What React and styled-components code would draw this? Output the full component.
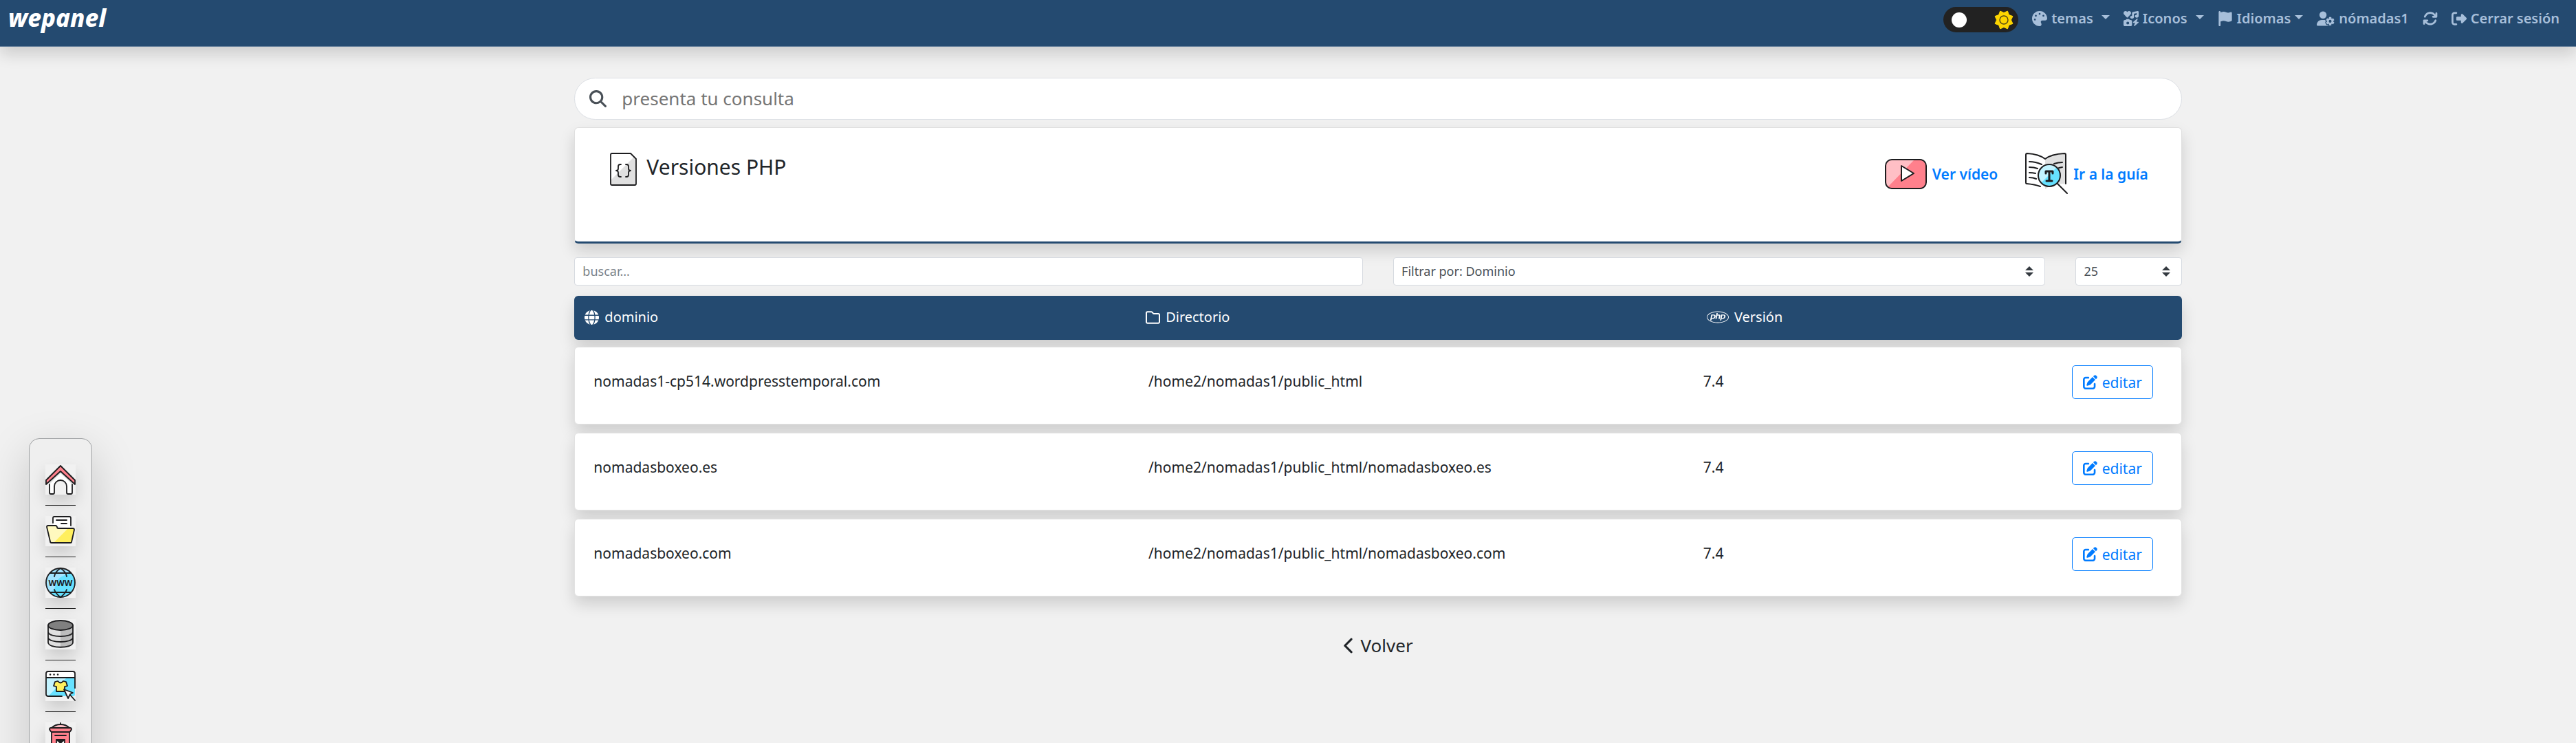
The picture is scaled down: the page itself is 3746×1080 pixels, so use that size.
import React from 'react'
import styled, { createGlobalStyle } from 'styled-components'
import {
    FaPalette, FaIcons, FaFlag, FaUserGear, FaArrowsRotate, FaRightFromBracket,
    FaMagnifyingGlass, FaGlobe, FaRegFolder, FaPhp, FaPenToSquare, FaChevronLeft
} from 'react-icons/fa6';

const domains = [
    { name: 'nomadas1-cp514.wordpresstemporal.com', dir: '/home2/nomadas1/public_html', php: '7.4' },
    { name: 'nomadasboxeo.es', dir: '/home2/nomadas1/public_html/nomadasboxeo.es', php: '7.4' },
    { name: 'nomadasboxeo.com', dir: '/home2/nomadas1/public_html/nomadasboxeo.com', php: '7.4' },
]

const ink = { stroke: '#1d1d1f', strokeWidth: 1.8, strokeLinecap: 'round', strokeLinejoin: 'round' }

const SunIcon = () => (
    <svg width="28" height="28" viewBox="-14 -14 28 28" aria-hidden="true">
        <path
            fill="#fdd500"
            d="M5.4-12.9 7.4-7.4 12.9-5.4 10.5 0 12.9 5.4 7.4 7.4 5.4 12.9 0 10.5-5.4 12.9-7.4 7.4-12.9 5.4-10.5 0-12.9-5.4-7.4-7.4-5.4-12.9 0-10.5Z"
            stroke="#fdd500" strokeWidth="1" strokeLinejoin="round"
        />
        <circle r="6" fill="none" stroke="#4d4416" strokeWidth="1.4" />
    </svg>
)

const CodeFileIcon = () => (
    <svg width="39" height="48" viewBox="0 0 39 48" aria-hidden="true">
        <path d="M3 1H30L38 9V45Q38 47 36 47H3Q1 47 1 45V3Q1 1 3 1Z" fill="#fff" />
        <path d="M38 3V45Q38 47 36 47H3Q1 47 1 45V40Z" fill="#e0e0e0" />
        <path d="M30 1H38V9Z" fill="#fff" />
        <g fill="none" {...ink}>
            <path d="M3 1H30L38 9V45Q38 47 36 47H3Q1 47 1 45V3Q1 1 3 1Z" />
            <path d="M16 17H15Q12 17 12 20V23Q12 26 9 26Q12 26 12 29V32Q12 35 15 35H16" />
            <path d="M23 17H24Q27 17 27 20V23Q27 26 30 26Q27 26 27 29V32Q27 35 24 35H23" />
        </g>
    </svg>
)

const VideoIcon = () => (
    <svg width="61" height="62" viewBox="0 0 61 62" aria-hidden="true">
        <rect x="1" y="10" width="59" height="42" rx="9" fill="#ff808c" />
        <path d="M10 10H43L5 49Q1 47 1 43V19Q1 10 10 10Z" fill="#ffbfc5" />
        <rect x="1" y="10" width="59" height="42" rx="9" fill="none" {...ink} strokeWidth="2" />
        <path d="M24 19V41L42 30Z" fill="#fff" {...ink} strokeWidth="2" />
    </svg>
)

const GuideIcon = () => (
    <svg width="62" height="62" viewBox="0 0 62 62" aria-hidden="true">
        <path d="M1 3Q1 1 3 1Q20 2 29 9V53Q20 45 1 45Z" fill="#fff" />
        <path d="M29 9Q38 2 57 1Q59 1 59 3V45Q38 45 29 53Z" fill="#e0e0e0" />
        <g fill="none" {...ink} strokeWidth="2">
            <path d="M22 49Q14 46 2 45Q1 45 1 43V3Q1 1 3 1Q20 2 29 9Q38 2 57 1Q59 1 59 3V45" />
            <path d="M6 13Q15 13 24 17M6 21Q13 21 18 23M6 29Q11 29 15 30M6 36Q12 36 16 38" />
            <path d="M42 16Q48 14 54 14M49 22L54 21" />
            <path d="M47 45L61 59" />
        </g>
        <circle cx="35" cy="33" r="16" fill="#66e1ff" />
        <path d="M23 44A16 16 0 0 1 46 21Z" fill="#c2f3ff" />
        <circle cx="35" cy="33" r="16" fill="none" {...ink} strokeWidth="2" />
        <path d="M30 30V27H40V30M35 27V41M31 41H39" fill="none" {...ink} strokeWidth="3" />
    </svg>
)

const HomeIcon = () => (
    <svg width="44" height="44" viewBox="0 0 44 44" aria-hidden="true">
        <path d="M6 28 22 11 39 28V43H31V32A9 9 0 0 0 13 32V43H6Z" fill="#fff" />
        <path d="M6 25 22 9 39 25V29L22 13 6 29Z" fill="#e0e0e0" />
        <path d="M22 2 1 23V29L22 10 43 29V23Z" fill="#ff808c" {...ink} />
        <path d="M6 29V41Q6 43 8 43H11Q13 43 13 41V32A9 9 0 0 1 31 32V41Q31 43 33 43H37Q39 43 39 41V29" fill="none" {...ink} />
    </svg>
)

const FolderIcon = () => (
    <svg width="44" height="44" viewBox="0 0 44 44" aria-hidden="true">
        <path d="M11 14V3Q11 1 13 1H35Q37 1 37 3V17Z" fill="#fff" />
        <path d="M11 10V3Q11 1 13 1H35Q37 1 37 3V14M16 6H31M23 11H31" fill="none" {...ink} />
        <path d="M4 14H15Q16 14 17 16Q17 18 19 18H40Q42 18 42 20L38 38Q38 39 36 39H9Q7 39 7 37L2 16Q2 14 4 14Z" fill="#ffef5e" />
        <path d="M4 14H15Q16 14 17 16Q17 18 19 18H33L12 39H9Q7 39 7 37L2 16Q2 14 4 14Z" fill="#fff9bf" />
        <path d="M4 14H15Q16 14 17 16Q17 18 19 18H40Q42 18 42 20L38 38Q38 39 36 39H9Q7 39 7 37L2 16Q2 14 4 14Z" fill="none" {...ink} />
    </svg>
)

const WwwIcon = () => (
    <svg width="44" height="44" viewBox="0 0 44 44" aria-hidden="true">
        <circle cx="22" cy="22" r="21" fill="#66e1ff" />
        <path d="M22 1A21 21 0 0 0 7 37Q15 30 16 22T36 8Q30 1 22 1Z" fill="#a3e4ff" />
        <g fill="none" {...ink}>
            <circle cx="22" cy="22" r="21" />
            <path d="M7 8H37M7 36H37M22 1Q14 6 13 13M22 1Q30 6 31 13M22 43Q15 38 13 32M22 43Q29 38 31 32" />
        </g>
        <text x="22" y="27" textAnchor="middle" fontFamily='"Noto Sans", sans-serif' fontSize="12" fontWeight="700" fill="#1d1d1f">WWW</text>
    </svg>
)

const DatabaseIcon = () => (
    <svg width="44" height="44" viewBox="0 0 44 44" aria-hidden="true">
        <path d="M4 9V34Q5 41 22 41V9Z" fill="#e0e0e0" />
        <path d="M40 9V34Q39 41 22 41V9Z" fill="#bdbdbd" />
        <path d="M4 9V34C5 43 39 43 40 34V9M4 19C6 27 38 27 40 19M4 27C6 35 38 35 40 27" fill="none" {...ink} />
        <ellipse cx="22" cy="9" rx="18" ry="7" fill="#808080" {...ink} />
    </svg>
)

const DesignIcon = () => (
    <svg width="44" height="44" viewBox="0 0 44 44" aria-hidden="true">
        <rect x="1" y="1" width="42" height="36" rx="3" fill="#66e1ff" />
        <path d="M1 10H31L5 36Q1 37 1 34Z" fill="#c2f3ff" />
        <path d="M1 10V4Q1 1 4 1H40Q43 1 43 4V10Z" fill="#fff" />
        <path d="M24 37H4Q1 37 1 34V4Q1 1 4 1H40Q43 1 43 4V25M1 10H43" fill="none" {...ink} />
        <path d="M7 5.5H7.1M12.5 5.5H12.6M18 5.5H18.1" {...ink} strokeWidth="2.5" />
        <path d="M18 15Q22 20 26 15L30 16 32 22 28 23V30H16V23L12 22 14 16Z" fill="#ffef5e" {...ink} />
        <path d="M35 34 43 43" {...ink} />
        <path d="M27 27 40 32 36 34 33 40Z" fill="#fff" {...ink} />
    </svg>
)

const MailboxIcon = () => (
    <svg width="44" height="44" viewBox="0 0 44 44" aria-hidden="true">
        <path d="M9 14H35V46H9Z" fill="#ff808c" {...ink} />
        <path d="M9 8Q14 3 22 3T35 8Z" fill="#ffbfc5" {...ink} />
        <path d="M22 1V3" {...ink} />
        <path d="M8 8H36Q38 8 38 10L37 12Q36 14 34 14H10Q8 14 7 12L6 10Q6 8 8 8Z" fill="#ff808c" {...ink} />
        <path d="M14 19H30" {...ink} />
        <path d="M16 25H28V40H16Z" fill="#fff" {...ink} />
        <path d="M16 25 22 30 28 25" fill="#1d1d1f" {...ink} />
    </svg>
)

const dock = [
    ['Inicio', HomeIcon],
    ['Archivos', FolderIcon],
    ['Dominios', WwwIcon],
    ['Bases de datos', DatabaseIcon],
    ['Diseño', DesignIcon],
    ['Correo', MailboxIcon],
]

const Navbar = () => {
    return (
        <NavContainer>
            <Logo href="#inicio">wepanel</Logo>
            <NavUl>
                <li>
                    <Switch>
                        <SwitchInput type="checkbox" aria-label="Modo oscuro" />
                        <Knob />
                        <SunIcon />
                    </Switch>
                </li>
                <li><NavButton type="button"><FaPalette />temas<Caret $gap="6px" /></NavButton></li>
                <li><NavButton type="button"><FaIcons />Iconos<Caret $gap="6px" /></NavButton></li>
                <li><NavButton type="button"><FaFlag />Idiomas<Caret /></NavButton></li>
                <li><NavLink href="#cuenta"><UserIcon />nómadas1</NavLink></li>
                <li><NavLink href="#recargar" aria-label="Recargar"><FaArrowsRotate /></NavLink></li>
                <li><NavLink href="#salir"><FaRightFromBracket />Cerrar sesión</NavLink></li>
            </NavUl>
        </NavContainer>
    )
}

const App = () => {
    return (
        <Wrapper>
            <GlobalStyle />
            <Navbar />
            <Layout>
                <Dock aria-label="Accesos">
                    {dock.map(([label, Icon]) => (
                        <DockItem key={label}>
                            <DockLink href="#" aria-label={label}><Icon /></DockLink>
                        </DockItem>
                    ))}
                </Dock>
                <Main>
                    <Search>
                        <FaMagnifyingGlass />
                        <SearchInput type="search" placeholder="presenta tu consulta" aria-label="presenta tu consulta" />
                    </Search>
                    <HeaderCard>
                        <Title>
                            <CodeFileIcon />
                            <h1>Versiones PHP</h1>
                        </Title>
                        <Help>
                            <HelpLink href="#video"><VideoIcon />Ver vídeo</HelpLink>
                            <HelpLink href="#guia"><GuideIcon />Ir a la guía</HelpLink>
                        </Help>
                    </HeaderCard>
                    <Filters>
                        <FilterInput type="text" placeholder="buscar..." aria-label="buscar" />
                        <FilterSelect $span={5} aria-label="Filtrar por">
                            <option>Filtrar por: Dominio</option>
                        </FilterSelect>
                        <FilterSelect $span={1} aria-label="Resultados">
                            <option>25</option>
                        </FilterSelect>
                    </Filters>
                    <Table>
                        <thead>
                            <HeadRow>
                                <HeadCell><FaGlobe />dominio</HeadCell>
                                <HeadCell><FaRegFolder />Directorio</HeadCell>
                                <HeadCell><PhpIcon />Versión</HeadCell>
                            </HeadRow>
                        </thead>
                        <tbody>
                            {domains.map((d) => (
                                <Row key={d.name}>
                                    <Cell>{d.name}</Cell>
                                    <Cell>{d.dir}</Cell>
                                    <Cell>
                                        {d.php}
                                        <EditButton type="button"><FaPenToSquare />editar</EditButton>
                                    </Cell>
                                </Row>
                            ))}
                        </tbody>
                    </Table>
                    <BackLink href="#volver"><FaChevronLeft />Volver</BackLink>
                </Main>
            </Layout>
        </Wrapper>
    )
}

export default App

const GlobalStyle = createGlobalStyle`
* {
    box-sizing: border-box;
}

body {
    margin: 0;
    background: #f1f1f1;
    color: #212529;
    font: 21px/30px "Noto Sans", "Open Sans", sans-serif;
}

input, select, button {
    font-family: inherit;
}

svg {
    flex-shrink: 0;
}
`

const Wrapper = styled.div`
height: 100vh;
overflow: hidden;
`

const NavContainer = styled.nav`
display: flex;
justify-content: space-between;
align-items: flex-start;
padding: 10px 24px 20px 12px;
background: #244a70;
border-bottom: 1px solid #5f7b98;
box-shadow: 0 11px 22px rgba(0, 0, 0, 0.15);
`

const Logo = styled.a`
color: #fff;
font-size: 35px;
font-style: italic;
font-weight: 800;
line-height: 32px;
text-decoration: none;
`

const NavUl = styled.ul`
display: flex;
align-items: flex-start;
gap: 20px;
list-style: none;
margin: 0;
padding: 0;
`

const NavLink = styled.a`
display: flex;
align-items: center;
gap: 6px;
min-height: 34px;
padding: 0;
border: 0;
background: none;
color: #a7bfda;
font-size: 20px;
font-weight: 600;
line-height: 34px;
text-decoration: none;
cursor: pointer;

svg {
    width: 22px;
    height: 22px;
}
`

const NavButton = styled(NavLink).attrs({ as: 'button' })``

const UserIcon = styled(FaUserGear)`
&& {
    width: 26px;
}
`

const Caret = styled.span`
border: 6px solid transparent;
border-top-color: #a7bfda;
border-bottom: 0;
margin-left: ${(p) => p.$gap || '0'};
margin-bottom: 4px;
`

const Switch = styled.label`
display: flex;
align-items: center;
justify-content: space-between;
width: 109px;
height: 37px;
padding: 0 7px 0 12px;
border-radius: 19px;
background: #222;
cursor: pointer;
`

const SwitchInput = styled.input`
position: absolute;
opacity: 0;
margin: 0;
`

const Knob = styled.span`
width: 22px;
height: 22px;
border-radius: 50%;
background: #fff;
`

const Layout = styled.div`
display: grid;
grid-template-columns: 22.3% 62.4% 1fr;
align-items: start;
`

const Dock = styled.ul`
justify-self: start;
list-style: none;
margin: 569px 0 0 42px;
padding: 22px 23px;
border: 1px solid #a0a2a4;
border-radius: 15px;
background: #efefef;
box-shadow: 0 22px 66px rgba(0, 0, 0, 0.18);
`

const DockItem = styled.li`
padding: 15px 0;

& + & {
    border-top: 1px solid #222;
}
`

const DockLink = styled.a`
display: block;
width: 44px;
height: 44px;
background: #f1f1f1;
box-shadow: 0 11px 22px rgba(0, 0, 0, 0.15);

svg {
    display: block;
}
`

const Main = styled.main`
display: flex;
flex-direction: column;
padding-top: 45px;
`

const Search = styled.label`
display: flex;
align-items: center;
gap: 22px;
height: 61px;
padding: 0 21px;
border: 1px solid #dcdfe4;
border-radius: 31px;
background: #fff;
color: #495057;

svg {
    width: 25px;
    height: 25px;
}
`

const SearchInput = styled.input`
flex: 1;
padding: 0 0 2px;
border: 0;
outline: 0;
background: none;
font-size: 26px;

&::placeholder {
    color: #757575;
}
`

const HeaderCard = styled.header`
display: flex;
justify-content: space-between;
align-items: flex-start;
min-height: 169px;
margin-top: 11px;
padding: 36px 48px 36px 51px;
border: 1px solid #dfdfdf;
border-bottom: 3px solid #244a70;
border-radius: 6px;
background: #fff;
box-shadow: 0 11px 22px rgba(0, 0, 0, 0.15);
`

const Title = styled.div`
display: flex;
gap: 14px;

h1 {
    margin: 0;
    font-size: 30px;
    font-weight: 400;
    line-height: 42px;
}
`

const Help = styled.div`
display: flex;
gap: 40px;
`

const HelpLink = styled.a`
display: flex;
align-items: center;
gap: 8px;
color: #007bff;
font-size: 21px;
font-weight: 600;
text-decoration: none;
`

const Filters = styled.div`
display: grid;
grid-template-columns: repeat(12, 1fr);
gap: 44px;
margin-top: 20px;
`

const FilterInput = styled.input`
grid-column: span 6;
height: 41px;
padding: 0 11px 2px;
border: 1px solid #d6dae0;
border-radius: 4px;
background: #fff;
color: #495057;
font-size: 18px;

&::placeholder {
    color: #7b838a;
}
`

const FilterSelect = styled.select`
grid-column: span ${(p) => p.$span};
min-width: 0;
height: 41px;
padding: 0 11px 2px;
border: 1px solid #d6dae0;
border-radius: 4px;
appearance: none;
background: #fff url("data:image/svg+xml,%3csvg xmlns='http://www.w3.org/2000/svg' viewBox='0 0 4 5'%3e%3cpath fill='%23343a40' d='M2 0L0 2h4zm0 5L0 3h4z'/%3e%3c/svg%3e") no-repeat right 16px center / 12px 15px;
color: #495057;
font-size: 18px;
`

const Table = styled.table`
display: block;
margin-top: 15px;

thead, tbody {
    display: block;
}
`

const HeadRow = styled.tr`
display: grid;
grid-template-columns: 34.9% 34.9% 1fr;
align-items: center;
padding: 16px 0 18px;
margin-bottom: 10px;
border-radius: 6px;
background: #244a70;
box-shadow: 0 11px 22px rgba(0, 0, 0, 0.15);
color: #fff;
`

const HeadCell = styled.th`
display: flex;
align-items: center;
gap: 8px;
padding: 0 15px;
font-size: 20px;
font-weight: 400;

svg {
    width: 21px;
    height: 21px;
}
`

const PhpIcon = styled(FaPhp)`
&& {
    width: 32px;
    height: 26px;
}
`

const Row = styled.tr`
display: grid;
grid-template-columns: 34.9% 34.9% 1fr;
align-items: start;
padding: 26px 12px 36px;
border: 1px solid #e2e2e2;
border-radius: 6px;
background: #fff;
box-shadow: 0 11px 22px rgba(0, 0, 0, 0.15);

& + & {
    margin-top: 12px;
}
`

const Cell = styled.td`
display: flex;
align-items: flex-start;
justify-content: space-between;
padding: 0 15px;
line-height: 46px;

&:last-child {
    padding-right: 29px;
}
`

const EditButton = styled.button`
display: flex;
align-items: center;
gap: 7px;
height: 49px;
padding: 0 15px;
border: 1px solid #007bff;
border-radius: 5px;
background: none;
color: #007bff;
font-size: 21px;
cursor: pointer;

svg {
    width: 21px;
    height: 21px;
}
`

const BackLink = styled.a`
display: flex;
align-items: center;
align-self: center;
gap: 9px;
margin-top: 53px;
color: #212529;
font-size: 26px;
line-height: 36px;
text-decoration: none;

svg {
    width: 16px;
    height: 25px;
}
`
